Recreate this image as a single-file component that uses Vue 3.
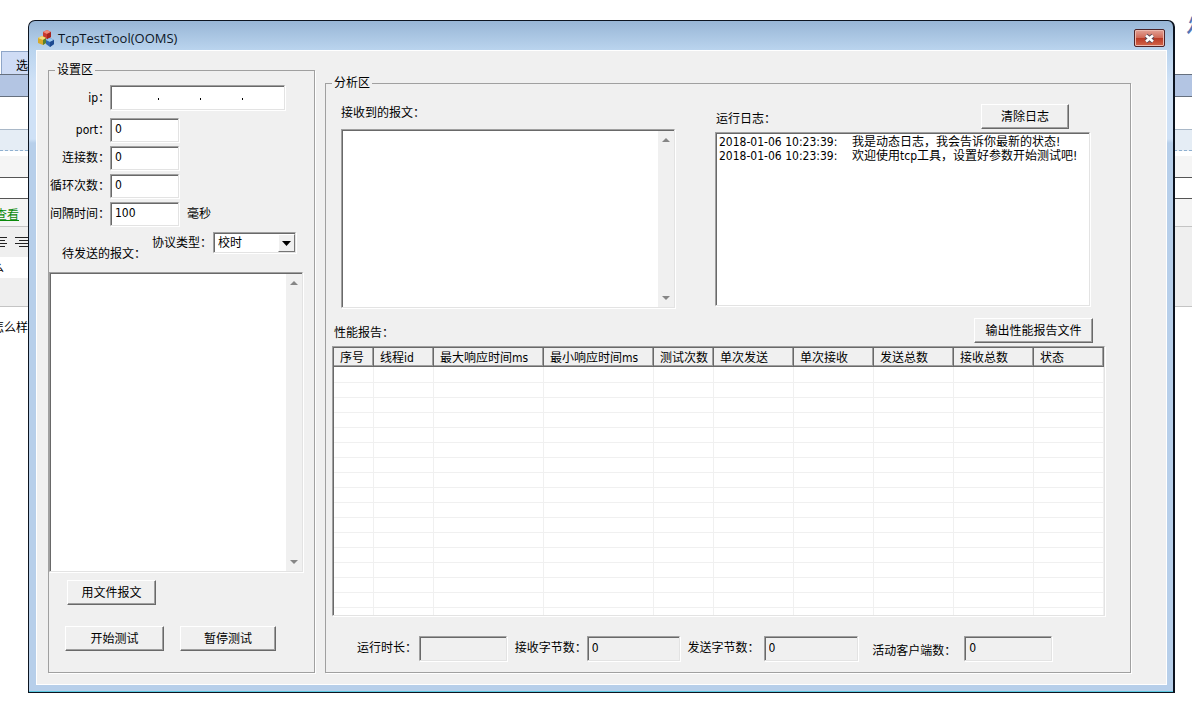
<script setup>
import { ref } from 'vue'

const settings = ref({ port: '0', connections: '0', loops: '0', interval: '100', protocol: '校时', message: '' })
const fields = [
  { key: 'port', label: 'port：' },
  { key: 'connections', label: '连接数：' },
  { key: 'loops', label: '循环次数：' },
  { key: 'interval', label: '间隔时间：', unit: '毫秒' }
]
const ip = ref(['', '', '', ''])
const received = ref('')
const logs = [
  { time: '2018-01-06 10:23:39:', text: '我是动态日志，我会告诉你最新的状态!' },
  { time: '2018-01-06 10:23:39:', text: '欢迎使用tcp工具，设置好参数开始测试吧!' }
]
const columns = [
  { name: '序号', width: 40 },
  { name: '线程id', width: 60 },
  { name: '最大响应时间ms', width: 110 },
  { name: '最小响应时间ms', width: 110 },
  { name: '测试次数', width: 60 },
  { name: '单次发送', width: 80 },
  { name: '单次接收', width: 80 },
  { name: '发送总数', width: 80 },
  { name: '接收总数', width: 80 },
  { name: '状态', width: 70 }
]
const stats = [
  { id: 'duration', label: '运行时长：', value: '' },
  { id: 'rx', label: '接收字节数：', value: '0' },
  { id: 'tx', label: '发送字节数：', value: '0' },
  { id: 'clients', label: '活动客户端数：', value: '0' }
]
</script>

<template>
  <div class="desktop">
    <div class="backdrop" aria-hidden="true">
      <div class="b-head"><span class="b-logo">烟</span></div>
      <div class="b-tabs"><span class="b-tab">选</span></div>
      <div class="b-band"></div>
      <div class="b-blank"></div>
      <div class="b-notice"></div>
      <div class="b-gray"></div>
      <div class="b-white"></div>
      <div class="b-view"><span>查看</span></div>
      <div class="b-tools">
        <svg width="28" height="12" viewBox="0 0 28 12"><path d="M0 1.5H7M0 4.5H5M0 7.5H7M0 10.5H5M15 1.5H28M19 4.5H28M15 7.5H28M19 10.5H28" stroke="#222" /></svg>
      </div>
      <div class="b-path"><span>么</span></div>
      <div class="b-foot"></div>
      <div class="b-text"><span>怎么样</span></div>
    </div>

    <main class="window">
      <header class="titlebar">
        <svg class="app-icon" width="17" height="17" viewBox="0 0 17 17">
          <path d="M5 2L9 0L13 2V7L9 9L5 7Z" fill="#c93a30" />
          <path d="M5 2L9 0L13 2L9 4Z" fill="#ef8a78" />
          <path d="M9 4V9L13 7V2Z" fill="#a5241f" />
          <path d="M0 8L4 6L8 8V13L5 15L0 13Z" fill="#d7a92b" />
          <path d="M0 8L4 6L8 8L5 10Z" fill="#f4df7d" />
          <path d="M5 10V15L8 13V8Z" fill="#57802f" />
          <path d="M8 10L12 8L16 10V14L12 17L8 14Z" fill="#2c66b4" />
          <path d="M8 10L12 8L16 10L12 12Z" fill="#9bc8ee" />
          <path d="M12 12V17L16 14V10Z" fill="#1c4a91" />
        </svg>
        <h1>TcpTestTool(OOMS)</h1>
        <button class="close" type="button" aria-label="关闭">
          <svg width="13" height="11" viewBox="0 0 13 11">
            <path d="M3 2.5L10 8.5M10 2.5L3 8.5" stroke="#5b4a58" stroke-width="4.4" />
            <path d="M3 2.5L10 8.5M10 2.5L3 8.5" stroke="#fff" stroke-width="2.6" />
          </svg>
        </button>
      </header>

      <div class="client">
        <fieldset class="settings">
          <legend>设置区</legend>
          <div class="form">
            <div class="row ip-row">
              <label for="ip0">ip：</label>
              <div class="ip sunken">
                <template v-for="(part, i) in ip" :key="i">
                  <span v-if="i" class="dot"></span>
                  <input :id="'ip' + i" v-model="ip[i]" type="text" maxlength="3" :aria-label="'ip ' + (i + 1)" />
                </template>
              </div>
            </div>
            <div v-for="f in fields" :key="f.key" class="row">
              <label :for="f.key">{{ f.label }}</label>
              <input :id="f.key" v-model="settings[f.key]" class="box sunken" type="text" />
              <span v-if="f.unit" class="unit">{{ f.unit }}</span>
            </div>
          </div>

          <div class="protocol-row">
            <label class="msg-label" for="message">待发送的报文：</label>
            <label class="type-label" for="protocol">协议类型：</label>
            <div class="select sunken">
              <select id="protocol" v-model="settings.protocol">
                <option>校时</option>
              </select>
              <span class="drop"><svg width="9" height="5" viewBox="0 0 9 5"><path d="M0 0H9L4.5 5Z" fill="#000" /></svg></span>
            </div>
          </div>

          <div class="area sunken message">
            <textarea id="message" v-model="settings.message"></textarea>
            <div class="scroll" aria-hidden="true">
              <svg width="8" height="4" viewBox="0 0 8 4"><path d="M0 4H8L4 0Z" fill="#868686" /></svg>
              <svg width="8" height="4" viewBox="0 0 8 4"><path d="M0 0H8L4 4Z" fill="#868686" /></svg>
            </div>
          </div>

          <div class="file-row"><button type="button" class="btn file">用文件报文</button></div>
          <div class="run-row">
            <button type="button" class="btn start">开始测试</button>
            <button type="button" class="btn pause">暂停测试</button>
          </div>
        </fieldset>

        <fieldset class="analysis">
          <legend>分析区</legend>
          <div class="top">
            <section class="received">
              <label for="received">接收到的报文：</label>
              <div class="area sunken">
                <textarea id="received" v-model="received"></textarea>
                <div class="scroll" aria-hidden="true">
                  <svg width="8" height="4" viewBox="0 0 8 4"><path d="M0 4H8L4 0Z" fill="#868686" /></svg>
                  <svg width="8" height="4" viewBox="0 0 8 4"><path d="M0 0H8L4 4Z" fill="#868686" /></svg>
                </div>
              </div>
            </section>
            <section class="logs">
              <div class="bar">
                <span>运行日志：</span>
                <button type="button" class="btn clear">清除日志</button>
              </div>
              <ul class="log-list sunken">
                <li v-for="(l, i) in logs" :key="i"><time>{{ l.time }}</time><span>{{ l.text }}</span></li>
              </ul>
            </section>
          </div>

          <div class="bar report-bar">
            <span>性能报告：</span>
            <button type="button" class="btn export">输出性能报告文件</button>
          </div>
          <div class="report sunken">
            <table>
              <colgroup><col v-for="c in columns" :key="c.name" :style="{ width: c.width + 'px' }" /></colgroup>
              <thead>
                <tr><th v-for="c in columns" :key="c.name" scope="col">{{ c.name }}</th></tr>
              </thead>
              <tbody>
                <tr v-for="r in 17" :key="r"><td v-for="c in columns" :key="c.name"></td></tr>
              </tbody>
            </table>
          </div>

          <div class="stats">
            <template v-for="s in stats" :key="s.id">
              <label :for="s.id" :class="s.id">{{ s.label }}</label>
              <input :id="s.id" class="box sunken" type="text" readonly :value="s.value" />
            </template>
          </div>
        </fieldset>
      </div>
    </main>
  </div>
</template>

<style>
body {
  background: #fff;
}
</style>

<style scoped>
.desktop {
  position: relative;
  min-height: 100vh;
  box-sizing: border-box;
  padding: 20px 17px 20px 28px;
  overflow: hidden;
  display: flex;
  font: 12px/14px "DejaVu Sans Condensed", "Noto Sans", "Noto Sans CJK SC", sans-serif;
  color: #000;
}
.desktop * {
  box-sizing: border-box;
}
input,
textarea,
select,
button {
  font: inherit;
  color: inherit;
  margin: 0;
}

/* page behind the window */
.backdrop {
  position: absolute;
  inset: 0;
  overflow: hidden;
  display: flex;
  flex-direction: column;
}
.b-head {
  height: 51px;
  display: flex;
  justify-content: flex-end;
}
.b-logo {
  margin: 12px -18px 0 0;
  font-size: 24px;
  line-height: 24px;
  font-weight: bold;
  font-style: italic;
  color: #5574b4;
}
.b-tabs {
  height: 23px;
}
.b-tab {
  display: block;
  width: 60px;
  height: 23px;
  margin-left: 1px;
  padding: 7px 0 0 14px;
  background: #cfdcf5;
  border: 1px solid #8fa6c8;
  border-bottom: 0;
}
.b-band {
  height: 23px;
  background: #b3c5e3;
  border: solid #66707e;
  border-width: 1px 0;
}
.b-blank {
  height: 32px;
}
.b-notice {
  height: 22px;
  background: #e5edf5;
  border-top: 1px solid #a9b8c8;
  border-bottom: 1px dashed #8fb0d0;
}
.b-gray {
  height: 27px;
  border-top: 5px solid #fff;
  background: #f5f5f5;
  border-bottom: 1px solid #555;
}
.b-white {
  height: 21px;
  border-bottom: 1px solid #555;
}
.b-view {
  height: 28px;
  padding-top: 9px;
  background: #f4f4f4;
  border-bottom: 1px solid #c4c4c4;
  color: #0a8a0a;
  text-decoration: underline;
}
.b-view span {
  margin-left: -5px;
}
.b-tools {
  height: 30px;
  padding-top: 9px;
  background: #efefef;
}
.b-path {
  height: 21px;
  background: linear-gradient(90deg, #fff 50%, #efefef 50%);
  padding-top: 4px;
}
.b-path span {
  margin-left: -8px;
}
.b-foot {
  height: 29px;
  background: #efefef;
  border-bottom: 1px solid #c4c4c4;
}
.b-text {
  padding-top: 14px;
}
.b-text span {
  margin-left: -8px;
}

/* window frame */
.window {
  position: relative;
  flex: 1;
  min-width: 0;
  display: flex;
  flex-direction: column;
  padding: 0 6px 7px 7px;
  border: 1px solid #0c1420;
  border-right-width: 2px;
  border-radius: 7px 7px 0 0;
  background:
    linear-gradient(#5cc8e0, #5cc8e0) bottom / 100% 1px no-repeat,
    linear-gradient(#98b6d6, #bad4ee 29px, #cfe1f6 60px, #cfe1f6 118px, #b7cfea 122px);
}
.titlebar {
  height: 29px;
  display: flex;
  align-items: center;
  padding: 5px 2px 0 2px;
}
.app-icon {
  margin-right: 3px;
}
h1 {
  flex: 1;
  margin: 0;
  font: 13px/16px "Open Sans", "Noto Sans", sans-serif;
  color: #0c1626;
}
.close {
  width: 31px;
  height: 18px;
  padding: 0;
  display: flex;
  align-items: center;
  justify-content: center;
  border: 1px solid #4e2428;
  border-radius: 2px;
  background: linear-gradient(#e3a296, #d06a58 48%, #b93a26 52%, #d4664a);
  box-shadow: inset 0 0 0 1px #ecb9ae;
}
.client {
  flex: 1;
  display: flex;
  gap: 10px;
  padding: 0 36px 12px 12px;
  background: #f0f0f0;
  box-shadow: inset 0 1px #fff, inset 1px 0 #fff, inset -1px -1px #fff;
}

/* group boxes */
fieldset {
  min-width: 0;
  margin: 0;
  padding: 0;
  display: flex;
  flex-direction: column;
  border: 1px solid #a0a0a0;
  box-shadow: 1px 1px #fff;
}
legend {
  margin-left: 6px;
  padding: 0 2px;
  background: #f0f0f0;
}
.settings {
  flex: 0 0 267px;
  margin-top: 13px;
  padding-top: 8px;
}
.analysis {
  flex: 1;
  margin-top: 26px;
  padding-top: 14px;
}
.sunken {
  border: 1px solid;
  border-color: #a0a0a0 #e3e3e3 #e3e3e3 #a0a0a0;
  box-shadow: inset 1px 1px #696969, 1px 1px #fff;
  padding: 1px 0 0 1px;
  background: #fff;
  border-radius: 0;
}
.box {
  width: 69px;
  height: 24px;
  padding: 0 4px 2px;
  outline: 0;
}
.btn {
  height: 25px;
  padding: 1px 0 0;
  background: #f0f0f0;
  border: 1px solid;
  border-color: #fff #696969 #696969 #fff;
  box-shadow: inset -1px -1px #a0a0a0;
  border-radius: 0;
}

/* settings */
.form {
  display: flex;
  flex-direction: column;
  gap: 4px;
}
.row {
  display: flex;
  align-items: center;
}
.row label {
  width: 61px;
  display: flex;
  justify-content: flex-end;
  white-space: nowrap;
}
.ip-row {
  margin-bottom: 4px;
}
.ip {
  width: 175px;
  height: 25px;
  display: flex;
  align-items: center;
  padding-left: 6px;
}
.ip input {
  flex: 1;
  min-width: 0;
  height: 18px;
  padding: 0;
  border: 0;
  outline: 0;
  text-align: center;
}
.dot {
  width: 1px;
  height: 2px;
  margin-top: 2px;
  background: #000;
}
.unit {
  margin-left: 8px;
}
.protocol-row {
  height: 29px;
  margin-top: 6px;
  padding-left: 13px;
  display: flex;
  align-items: flex-start;
}
.msg-label {
  align-self: flex-end;
  width: 90px;
}
.type-label {
  margin-top: 4px;
  width: 61px;
}
.select {
  position: relative;
  width: 83px;
  height: 21px;
}
.select select {
  width: 100%;
  height: 18px;
  padding: 0 18px 0 3px;
  border: 0;
  outline: 0;
  appearance: none;
  background: transparent;
}
.drop {
  position: absolute;
  top: 1px;
  right: 0;
  width: 17px;
  height: 18px;
  display: flex;
  align-items: center;
  justify-content: center;
  background: #f0f0f0;
  border: 1px solid;
  border-color: #fff #757575 #757575 #fff;
  pointer-events: none;
}
.area {
  display: flex;
}
.area textarea {
  flex: 1;
  min-width: 0;
  padding: 2px;
  border: 0;
  outline: 0;
  resize: none;
  background: transparent;
}
.scroll {
  width: 16px;
  padding: 7px 0;
  display: flex;
  flex-direction: column;
  align-items: center;
  justify-content: space-between;
  background: #f0f0f0;
}
.message {
  flex: 1 1 200px;
  margin: 11px 11px 0 0;
}
.file-row {
  margin: 8px 0 0 18px;
}
.file {
  width: 89px;
}
.run-row {
  margin: 21px 0 21px 16px;
  display: flex;
  gap: 16px;
}
.start {
  width: 99px;
}
.pause {
  width: 96px;
}

/* analysis */
.top {
  display: flex;
  gap: 40px;
  padding: 0 40px 0 15px;
}
.received {
  flex: 334 1 0;
  min-width: 0;
}
.received label {
  display: block;
  padding: 2px 0 9px;
}
.received .area {
  height: 179px;
}
.logs {
  flex: 375 1 0;
  min-width: 0;
}
.bar {
  display: flex;
  align-items: center;
  justify-content: space-between;
}
.bar span {
  padding-top: 4px;
}
.logs .bar {
  padding: 0 21px 0 1px;
}
.clear {
  width: 88px;
}
.log-list {
  height: 174px;
  margin: 3px 0 0;
  padding: 2px 3px;
  list-style: none;
  overflow: hidden;
}
.log-list li {
  display: flex;
  white-space: nowrap;
}
.log-list time {
  width: 133px;
}
.report-bar {
  margin-top: 10px;
  padding: 0 37px 0 8px;
}
.export {
  width: 119px;
}
.report {
  flex: 1 1 200px;
  margin: 3px 25px 0 6px;
  overflow: hidden;
}
table {
  width: 100%;
  table-layout: fixed;
  border-collapse: separate;
  border-spacing: 0;
}
th {
  height: 19px;
  padding: 2px 0 0 6px;
  font-weight: normal;
  text-align: left;
  white-space: nowrap;
  background: #f0f0f0;
  border: solid;
  border-width: 0 1px 1px 0;
  border-color: #696969;
  box-shadow: inset -1px -1px #a0a0a0;
}
td {
  height: 15px;
  padding: 0;
  border: solid #f0f0f0;
  border-width: 0 1px 1px 0;
}
tbody tr:first-child td {
  height: 16px;
}
.stats {
  display: grid;
  grid-template-columns: 62px 88fr 80px 93fr 84px 95fr 106px 88fr;
  align-items: center;
  margin: 20px 78px 11px 31px;
}
.stats label {
  white-space: nowrap;
  padding-bottom: 2px;
}
.stats .box {
  width: 100%;
  height: 25px;
  background: #f0f0f0;
}
.stats .rx,
.stats .tx {
  padding-left: 8px;
}
.stats .clients {
  padding: 4px 0 0 14px;
}
</style>
